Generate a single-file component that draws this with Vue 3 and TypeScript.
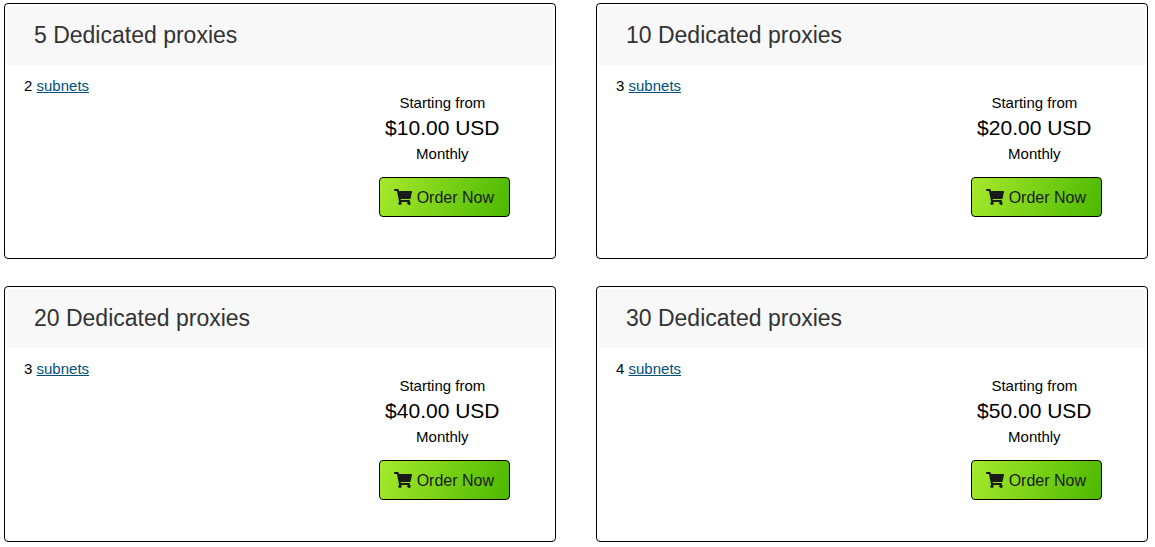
<script setup lang="ts">
interface Plan {
  id: string
  proxies: number
  subnets: number
  price: string
}

const plans: Plan[] = [
  { id: 'p5', proxies: 5, subnets: 2, price: '$10.00 USD' },
  { id: 'p10', proxies: 10, subnets: 3, price: '$20.00 USD' },
  { id: 'p20', proxies: 20, subnets: 3, price: '$40.00 USD' },
  { id: 'p30', proxies: 30, subnets: 4, price: '$50.00 USD' },
]
</script>

<template>
  <main class="plans">
    <article v-for="plan in plans" :key="plan.id" class="plan">
      <header class="plan-header">
        <h2 class="plan-title">{{ plan.proxies }} Dedicated proxies</h2>
      </header>
      <div class="plan-body">
        <p class="description">{{ plan.subnets }} <a href="#subnets">subnets</a></p>
        <footer class="pricing">
          <div class="cost">
            <span>Starting from</span>
            <span class="price">{{ plan.price }}</span>
            <span>Monthly</span>
          </div>
          <button type="button" class="order">
            <svg class="cart" viewBox="0 0 576 512" aria-hidden="true">
              <path
                d="M528.12 301.319l47.273-208C578.806 78.301 567.391 64 551.99 64H159.208l-9.166-44.81C147.758 8.021 137.93 0 126.529 0H24C10.745 0 0 10.745 0 24v16c0 13.255 10.745 24 24 24h69.883l70.248 343.435C147.325 417.1 136 435.222 136 456c0 30.928 25.072 56 56 56s56-25.072 56-56c0-15.674-6.447-29.835-16.824-40h209.647C430.447 426.165 424 440.326 424 456c0 30.928 25.072 56 56 56s56-25.072 56-56c0-22.172-12.888-41.332-31.579-50.405l5.517-24.276c3.413-15.018-8.002-29.319-23.403-29.319H218.117l-6.545-32h293.145c11.206 0 20.92-7.754 23.403-18.681z"
              />
            </svg>
            Order Now
          </button>
        </footer>
      </div>
    </article>
  </main>
</template>

<style>
body {
  margin: 0;
  background: #fff;
}
</style>

<style scoped>
.plans {
  display: grid;
  grid-template-columns: repeat(2, minmax(0, 1fr));
  gap: 27px 40px;
  padding: 3px 7px 4px 4px;
  font-family: "Liberation Sans", Arial, sans-serif;
  font-size: 15px;
  line-height: 20px;
  color: #000;
}

.plan {
  padding: 2px;
  border: 1px solid #000;
  border-radius: 4px;
}

.plan-header {
  padding: 14px 27px;
  background: #f8f8f8;
}

.plan-title {
  margin: 0;
  font-size: 23px;
  font-weight: 400;
  line-height: 31px;
  color: #333;
}

.plan-body {
  display: flex;
  justify-content: space-between;
  align-items: flex-start;
  padding: 11px 43px 39px 17px;
}

.description {
  margin: 0;
}

.description a {
  color: #00507d;
  text-decoration: underline;
}

.pricing {
  margin-top: 17px;
}

.cost {
  display: flex;
  flex-direction: column;
  align-items: center;
  padding-right: 4px;
}

.price {
  margin: 3px 0 4px;
  font-size: 21px;
  line-height: 24px;
}

.order {
  display: flex;
  align-items: center;
  gap: 5px;
  margin: 13px 0 0;
  padding: 9px 15px 7px 14px;
  border: 1px solid #000;
  border-radius: 4px;
  background: linear-gradient(110deg, #a6ea2c, #4cb800);
  font-family: inherit;
  font-size: 16px;
  line-height: 22px;
  color: #1a1a1a;
  cursor: pointer;
}

.cart {
  width: 18px;
  height: 16px;
  margin-bottom: 2px;
  fill: currentColor;
}
</style>
